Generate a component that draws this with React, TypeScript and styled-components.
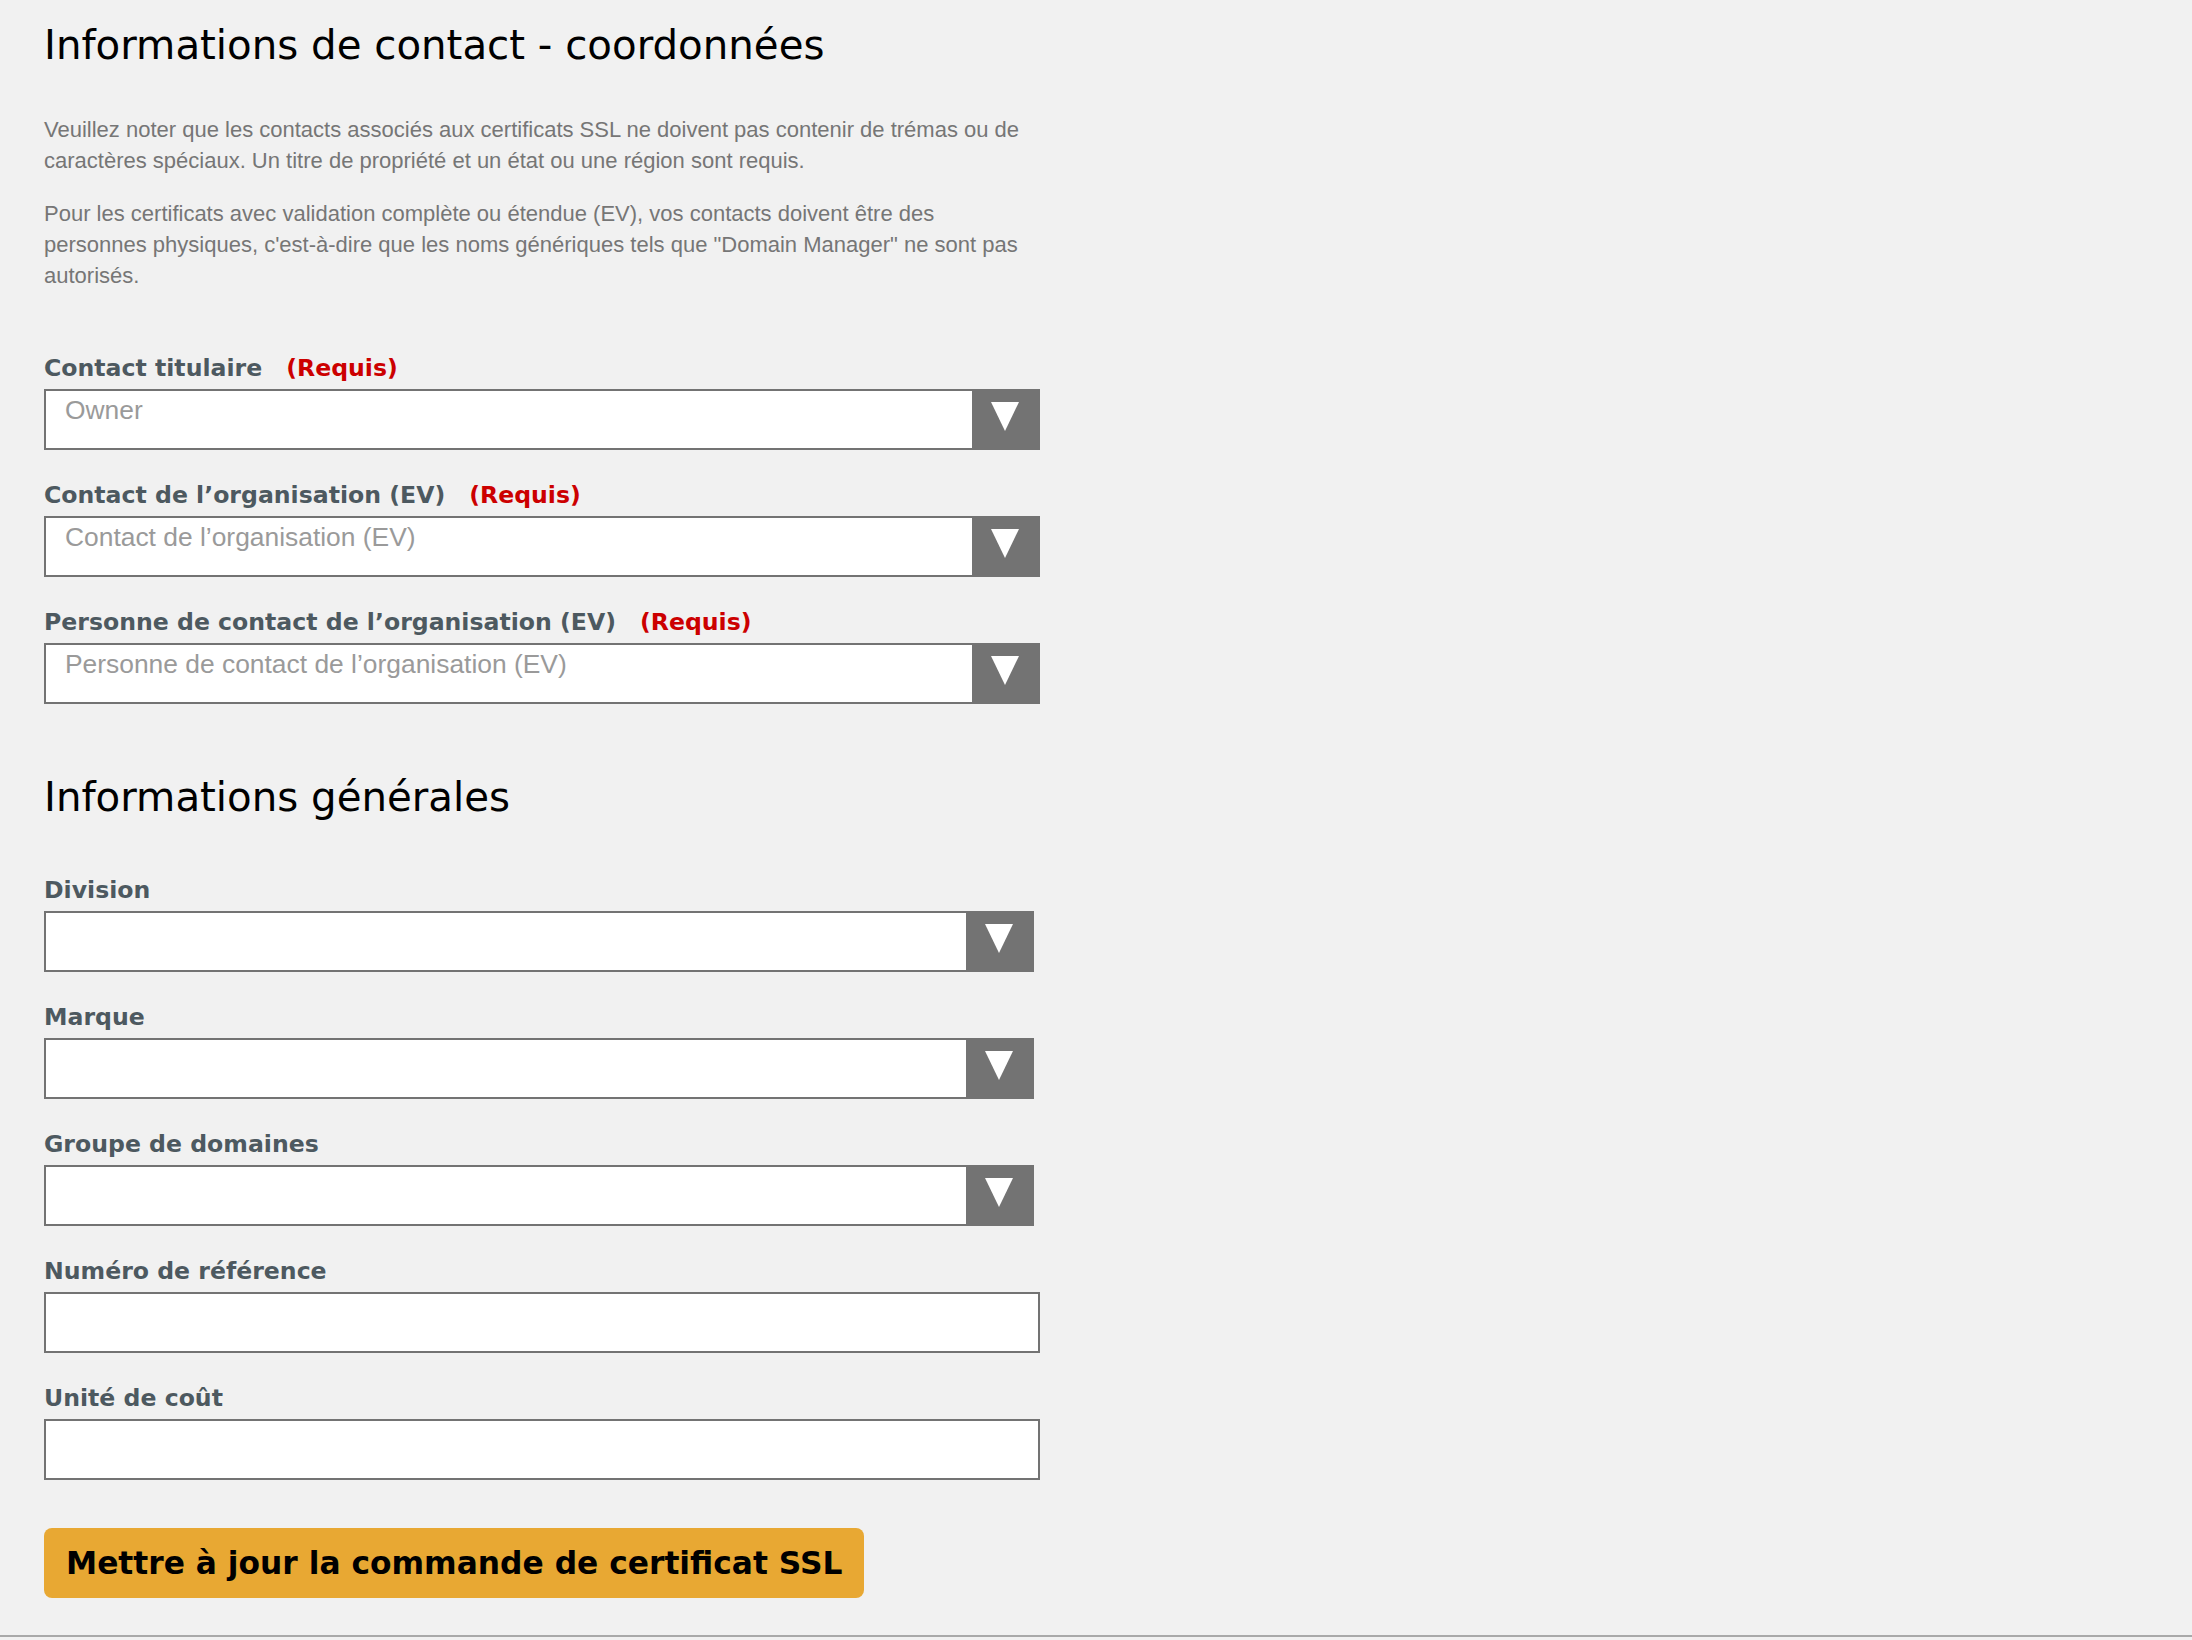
import React from 'react';
import styled, { createGlobalStyle } from 'styled-components';

const GlobalStyle = createGlobalStyle`
    html, body {
        margin: 0;
        padding: 0;
        background: #f1f1f1;
        overflow: hidden;
    }
`;

const Page = styled.div`
    display: flex;
    flex-direction: column;
    min-height: 1640px;
    background: #f1f1f1;
`;

const Content = styled.div`
    display: flex;
    flex-direction: column;
    padding: 22px 0 0 44px;
    width: 996px;
`;

const Heading = styled.h2<{ $top?: number }>`
    font-family: 'DejaVu Sans', sans-serif;
    font-weight: 400;
    font-size: 40.3px;
    line-height: 48px;
    color: #000;
    margin: ${p => p.$top ?? 0}px 0 0 0;
`;

const Note = styled.p<{ $top: number }>`
    font-family: 'Liberation Sans', Arial, sans-serif;
    font-size: 22px;
    line-height: 31px;
    color: #767676;
    margin: ${p => p.$top}px 0 0 0;
`;

const Field = styled.div<{ $top: number }>`
    display: flex;
    flex-direction: column;
    margin-top: ${p => p.$top}px;
`;

const Label = styled.label`
    display: flex;
    gap: 24px;
    font-family: 'DejaVu Sans', sans-serif;
    font-weight: 700;
    font-size: 23.6px;
    line-height: 30px;
    color: #4d5960;
    margin-bottom: 6px;
`;

const Required = styled.span`
    color: #cc0000;
`;

const SelectBox = styled.div<{ $narrow?: boolean }>`
    display: flex;
    box-sizing: border-box;
    height: 61px;
    width: ${p => (p.$narrow ? 990 : 996)}px;
    border: 2px solid #737373;
    background: #fff;
`;

const SelectValue = styled.div`
    flex: 1;
    padding: 4px 0 0 19px;
    font-family: 'Liberation Sans', Arial, sans-serif;
    font-size: 26.4px;
    line-height: 30px;
    color: #9a9a9a;
`;

const ArrowBox = styled.div`
    display: flex;
    justify-content: center;
    align-items: flex-start;
    width: 66px;
    padding-top: 11px;
    background: #737373;
`;

const TextInput = styled.div`
    box-sizing: border-box;
    height: 61px;
    width: 996px;
    border: 2px solid #737373;
    background: #fff;
`;

const SubmitButton = styled.button`
    align-self: flex-start;
    margin-top: 48px;
    height: 70px;
    padding: 0 22px;
    border: none;
    border-radius: 8px;
    background: #e8a833;
    font-family: 'DejaVu Sans', sans-serif;
    font-weight: 700;
    font-size: 31.3px;
    color: #000;
    cursor: pointer;
`;

const Divider = styled.div`
    margin-top: 37px;
    border-top: 2px solid #a9a9a9;
`;

function Arrow() {
    return (
        <svg width="28" height="29" viewBox="0 0 28 29">
            <polygon points="0,0 28,0 14,29" fill="#fff" />
        </svg>
    );
}

function Select({ value, narrow }: { value?: string; narrow?: boolean }) {
    return (
        <SelectBox $narrow={narrow}>
            <SelectValue>{value}</SelectValue>
            <ArrowBox><Arrow /></ArrowBox>
        </SelectBox>
    );
}

const contacts = [
    { label: 'Contact titulaire', placeholder: 'Owner' },
    { label: 'Contact de l’organisation (EV)', placeholder: 'Contact de l’organisation (EV)' },
    { label: 'Personne de contact de l’organisation (EV)', placeholder: 'Personne de contact de l’organisation (EV)' },
];

export default function App() {
    return (
        <Page>
            <GlobalStyle />
            <Content>
                <Heading>Informations de contact - coordonnées</Heading>
                <Note $top={44}>
                    Veuillez noter que les contacts associés aux certificats SSL ne doivent pas contenir de trémas ou de
                    caractères spéciaux. Un titre de propriété et un état ou une région sont requis.
                </Note>
                <Note $top={22}>
                    Pour les certificats avec validation complète ou étendue (EV), vos contacts doivent être des
                    personnes physiques, c'est-à-dire que les noms génériques tels que "Domain Manager" ne sont pas
                    autorisés.
                </Note>

                {contacts.map((c, idx) => (
                    <Field key={`contact-${idx}`} $top={idx === 0 ? 62 : 30}>
                        <Label>
                            <span>{c.label}</span>
                            <Required>(Requis)</Required>
                        </Label>
                        <Select value={c.placeholder} />
                    </Field>
                ))}

                <Heading $top={70}>Informations générales</Heading>

                <Field $top={53}>
                    <Label>Division</Label>
                    <Select narrow />
                </Field>
                <Field $top={30}>
                    <Label>Marque</Label>
                    <Select narrow />
                </Field>
                <Field $top={30}>
                    <Label>Groupe de domaines</Label>
                    <Select narrow />
                </Field>
                <Field $top={30}>
                    <Label>Numéro de référence</Label>
                    <TextInput />
                </Field>
                <Field $top={30}>
                    <Label>Unité de coût</Label>
                    <TextInput />
                </Field>

                <SubmitButton>Mettre à jour la commande de certificat SSL</SubmitButton>
            </Content>
            <Divider />
        </Page>
    );
}
